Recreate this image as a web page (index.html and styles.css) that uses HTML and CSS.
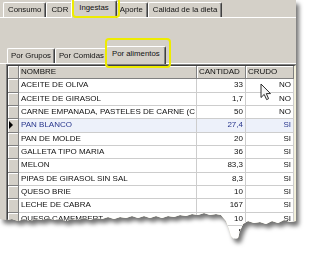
FILE: index.html
```html
<!DOCTYPE html>
<html lang="es">
<head>
    <meta charset="UTF-8">
    <title>Ingestas - Por alimentos</title>
    <link rel="stylesheet" href="styles.css">
</head>
<body>
    <div class="paper">
        <div class="window">
            <!--pestañas principales-->
            <div class="tabs">
                <div class="tab">Consumo</div>
                <div class="tab">CDR</div>
                <div class="tab active">Ingestas</div>
                <div class="tab">Aporte</div>
                <div class="tab">Calidad de la dieta</div>
            </div>
            <div class="page">
                <div class="tabs sub">
                    <div class="tab">Por Grupos</div>
                    <div class="tab">Por Comidas</div>
                    <div class="tab active">Por alimentos</div>
                </div>
                <!--tabla de alimentos-->
                <div class="grid">
                    <div class="grid-body">
                        <div class="row head"><div class="ind"></div><div class="cell">NOMBRE</div><div class="cell">CANTIDAD</div><div class="cell">CRUDO</div></div>
                        <div class="row"><div class="ind"></div><div class="cell">ACEITE DE OLIVA</div><div class="cell num">33</div><div class="cell num">NO</div></div>
                        <div class="row"><div class="ind"></div><div class="cell">ACEITE DE GIRASOL</div><div class="cell num">1,7</div><div class="cell num">NO</div></div>
                        <div class="row"><div class="ind"></div><div class="cell">CARNE EMPANADA, PASTELES DE CARNE (C</div><div class="cell num">50</div><div class="cell num">NO</div></div>
                        <div class="row sel"><div class="ind current"></div><div class="cell">PAN BLANCO</div><div class="cell num">27,4</div><div class="cell num">SI</div></div>
                        <div class="row"><div class="ind"></div><div class="cell">PAN DE MOLDE</div><div class="cell num">20</div><div class="cell num">SI</div></div>
                        <div class="row"><div class="ind"></div><div class="cell">GALLETA TIPO MARIA</div><div class="cell num">36</div><div class="cell num">SI</div></div>
                        <div class="row"><div class="ind"></div><div class="cell">MELON</div><div class="cell num">83,3</div><div class="cell num">SI</div></div>
                        <div class="row"><div class="ind"></div><div class="cell">PIPAS DE GIRASOL SIN SAL</div><div class="cell num">8,3</div><div class="cell num">SI</div></div>
                        <div class="row"><div class="ind"></div><div class="cell">QUESO BRIE</div><div class="cell num">10</div><div class="cell num">SI</div></div>
                        <div class="row"><div class="ind"></div><div class="cell">LECHE DE CABRA</div><div class="cell num">167</div><div class="cell num">SI</div></div>
                        <div class="row"><div class="ind"></div><div class="cell">QUESO CAMEMBERT</div><div class="cell num">10</div><div class="cell num">SI</div></div>
                        <div class="row"><div class="ind"></div><div class="cell">YOGUR NATURAL</div><div class="cell num">5</div><div class="cell num">SI</div></div>
                    </div>
                </div>
            </div>
        </div>
    </div>
    <!--marcas amarillas-->
    <div class="mark mark-ingestas"></div>
    <div class="mark mark-alimentos"></div>
    <svg class="cursor" width="12" height="18" viewBox="0 0 12 18">
        <path d="M1 1 V14.5 L4.2 11.4 L6.6 16.6 L8.6 15.7 L6.3 10.6 H10.5 Z" fill="#f6f6f6" stroke="#2a2a2a" stroke-width="1" stroke-linejoin="round"/>
    </svg>
</body>
</html>
```

FILE: styles.css
```css
*{
    margin: 0;
    padding: 0;
    box-sizing: border-box;
}
body{
    background-color: #fff;
    font-family: "Liberation Sans", Arial, sans-serif;
    font-size: 8px;
    color: #111;
    position: relative;
    width: 309px;
    height: 253px;
    overflow: hidden;
}
/*hoja con sombra y borde roto*/
.paper{
    width: 304px;
    filter: drop-shadow(3px 4px 2px rgba(0, 0, 0, 0.55));
}
.window{
    width: 296px;
    height: 240px;
    background-color: #d4d0c8;
    overflow: hidden;
    clip-path: polygon(0 0, 296px 0, 296px 221px, 290px 222px, 284px 220px, 278px 223px, 272px 221px, 266px 224px,
        260px 222px, 254px 223px, 248px 221px, 243px 224px, 240px 231px, 238px 238px, 234px 239px, 231px 236px,
        229px 229px, 226px 221px, 221px 215px, 216px 214px, 210px 215px, 204px 213px, 198px 215px, 192px 214px,
        186px 216px, 180px 215px, 174px 217px, 168px 216px, 162px 218px, 156px 216px, 150px 218px, 144px 216px,
        138px 218px, 132px 216px, 126px 218px, 120px 217px, 114px 219px, 108px 217px, 102px 219px, 96px 218px,
        90px 220px, 84px 218px, 78px 220px, 72px 219px, 66px 221px, 60px 219px, 54px 220px, 48px 218px,
        42px 220px, 36px 219px, 30px 221px, 24px 219px, 18px 221px, 12px 219px, 6px 220px, 0 219px);
}
/*pestañas*/
.tabs{
    display: flex;
    align-items: flex-end;
    height: 18px;
    padding-left: 3px;
    border-bottom: 1px solid #fff;
}
.tabs .tab{
    height: 15px;
    padding: 0 4px;
    line-height: 13px;
    font-size: 7.8px;
    white-space: nowrap;
    background-color: #d4d0c8;
    border-top: 1px solid #fff;
    border-left: 1px solid #fff;
    border-right: 1px solid #404040;
    box-shadow: inset -1px 0 #808080;
    border-radius: 2px 2px 0 0;
}
.tabs .active{
    position: relative;
    height: 18px;
    margin: 0 -2px -1px;
    padding: 0 7px;
    line-height: 14px;
}
.page{
    padding-top: 27px;
}
.tabs.sub{
    height: 19px;
    padding-left: 7px;
}
.tabs.sub .tab{
    padding: 0 3px;
}
.tabs.sub .active{
    padding: 0 5px;
}
/*tabla*/
.grid{
    margin-left: 6px;
    border-top: 1px solid #808080;
    border-left: 1px solid #808080;
}
.grid-body{
    border-top: 1px solid #404040;
    border-left: 1px solid #404040;
    border-right: 2px solid #f3f0da;
    background-color: #f3f0da;
}
.row{
    display: grid;
    grid-template-columns: 11px 178px 49px 48px;
    height: 13.33px;
}
.row .cell{
    padding: 0 2px;
    line-height: 12.3px;
    white-space: nowrap;
    overflow: hidden;
    background-color: #fff;
    border-right: 1px solid #cdcdcd;
    border-bottom: 1px solid #cdcdcd;
}
.row .num{
    text-align: right;
    padding-right: 2px;
}
.row .ind,
.row.head .cell{
    background-color: #d4d0c8;
    border-right: 1px solid #808080;
    border-bottom: 1px solid #808080;
    box-shadow: inset 1px 1px #fff;
}
.row.head .cell{
    text-align: left;
}
.row .ind.current{
    position: relative;
}
.row .ind.current::after{
    content: "";
    position: absolute;
    left: 1px;
    top: 2px;
    border-left: 4px solid #000;
    border-top: 4px solid transparent;
    border-bottom: 4px solid transparent;
}
.row.sel .cell{
    background-color: #edf1fa;
    color: #28368c;
}
/*marcas amarillas y cursor*/
.mark{
    position: absolute;
    border: 2.5px solid #eeec00;
    border-radius: 4px;
}
.mark-ingestas{
    left: 72px;
    top: -3px;
    width: 48px;
    height: 21px;
}
.mark-alimentos{
    left: 105px;
    top: 38px;
    width: 66px;
    height: 30px;
}
.cursor{
    position: absolute;
    left: 260px;
    top: 83px;
}
```
